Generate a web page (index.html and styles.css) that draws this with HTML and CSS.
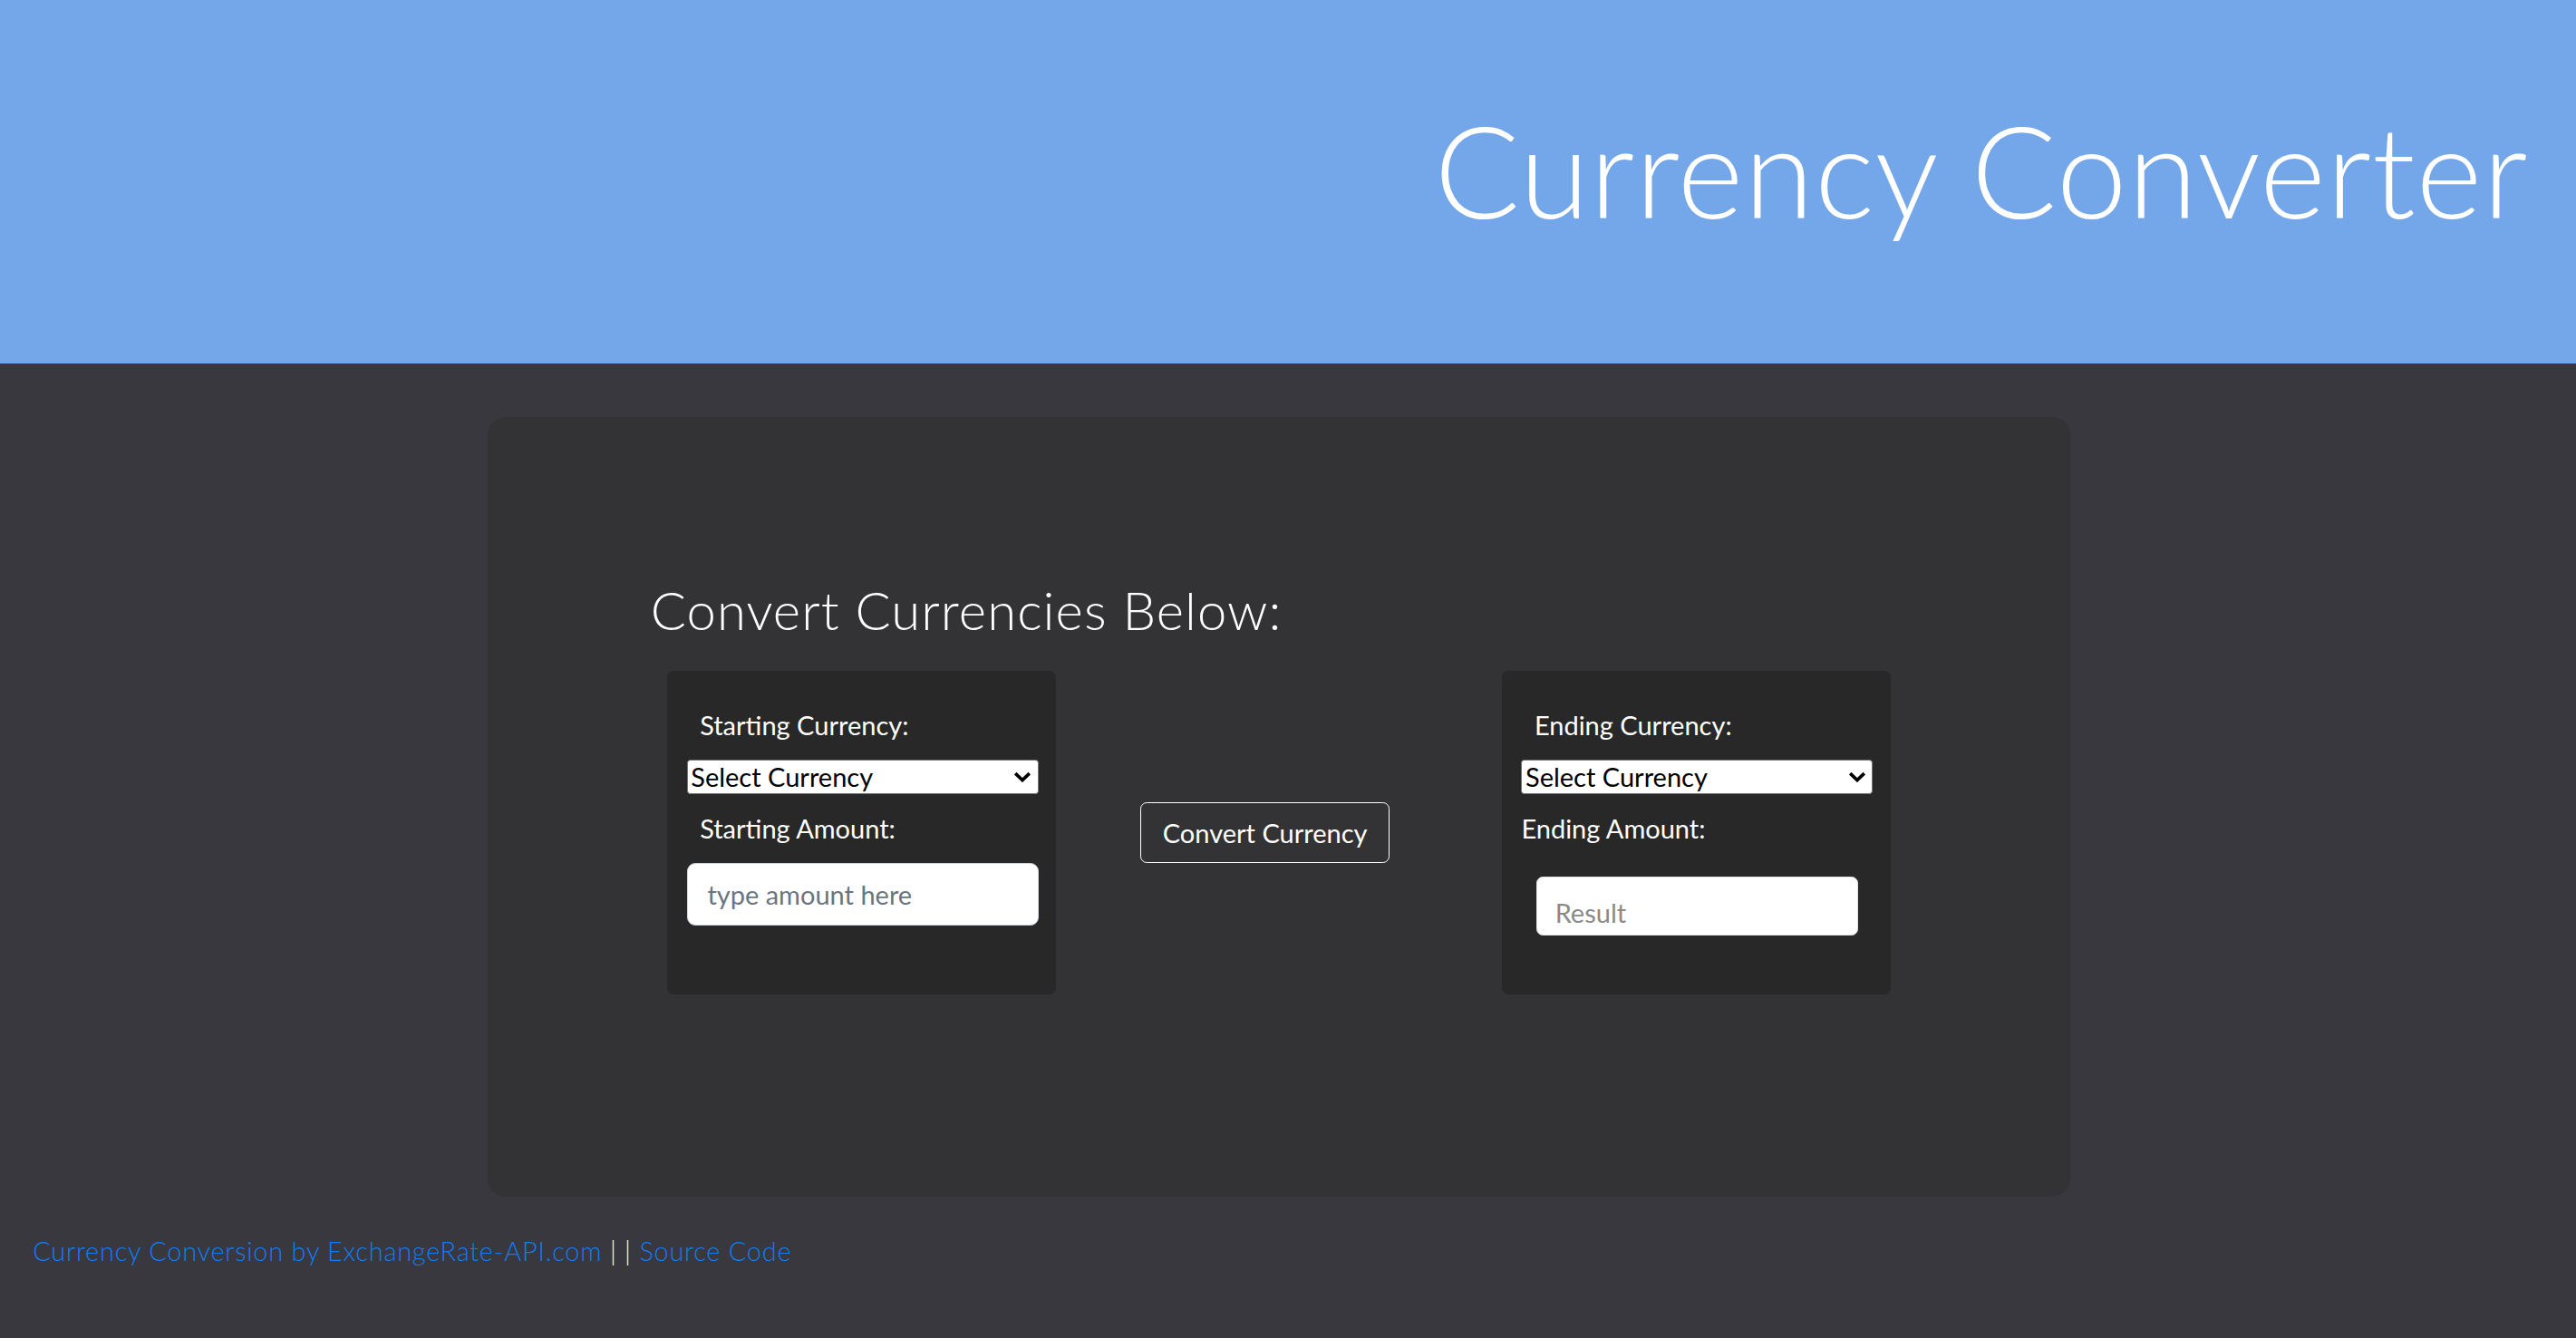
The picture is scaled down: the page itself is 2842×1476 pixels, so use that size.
FILE: index.html
```html
<!DOCTYPE html>
<html lang="en">
<head>
<meta charset="utf-8">
<title>Currency Converter</title>
<link rel="stylesheet" href="styles.css">
</head>
<body>
<header class="site-header">
  <h1 class="site-title">Currency Converter</h1>
</header>
<main class="page">
  <section class="converter-card">
    <h2 class="converter-heading">Convert Currencies Below:</h2>
    <div class="converter-row">
      <div class="currency-box">
        <label class="field-label field-label--indent" for="from">Starting Currency:</label>
        <div class="select-wrap">
          <select class="currency-select" id="from"><option>Select Currency</option></select>
          <svg class="select-chevron" viewBox="0 0 11 7" width="11" height="7" aria-hidden="true"><path d="M1.2 1.2 L5.5 5.3 L9.8 1.2" fill="none" stroke="#000" stroke-width="2"/></svg>
        </div>
        <label class="field-label field-label--indent" for="amount">Starting Amount:</label>
        <input class="amount-input" id="amount" type="text" placeholder="type amount here">
      </div>
      <button class="convert-btn" type="button">Convert Currency</button>
      <div class="currency-box currency-box--end">
        <label class="field-label field-label--indent" for="to">Ending Currency:</label>
        <div class="select-wrap">
          <select class="currency-select" id="to"><option>Select Currency</option></select>
          <svg class="select-chevron" viewBox="0 0 11 7" width="11" height="7" aria-hidden="true"><path d="M1.2 1.2 L5.5 5.3 L9.8 1.2" fill="none" stroke="#000" stroke-width="2"/></svg>
        </div>
        <label class="field-label" for="result">Ending Amount:</label>
        <input class="result-input" id="result" type="text" placeholder="Result">
      </div>
    </div>
  </section>
</main>
<footer class="site-footer">
  <a class="footer-link" href="#">Currency Conversion by ExchangeRate-API.com</a> | | <a class="footer-link" href="#">Source Code</a>
</footer>
</body>
</html>
```
FILE: styles.css
```css
html {
  zoom: 1.8125;
  background: #39383e;
}
body {
  margin: 0;
  background: #39383e;
  color: #fff;
  font-family: "Lato", "Open Sans", sans-serif;
  font-size: 16px;
  line-height: 1.5;
  min-height: 814px;
}
.site-header {
  background: #74a7e9;
  height: 221px;
  display: flex;
  justify-content: flex-end;
  padding-right: 29px;
}
.site-title {
  margin: 0;
  padding-top: 65px;
  font-size: 77px;
  font-weight: 300;
  line-height: 1;
  color: #fff;
  letter-spacing: 0.5px;
}
.page {
  padding-top: 33px;
}
.converter-card {
  margin-left: 297px;
  width: 963px;
  height: 474px;
  box-sizing: border-box;
  background: #333335;
  border-radius: 11px;
  padding-top: 98px;
}
.converter-heading {
  margin: 0 0 18px 99px;
  font-size: 32px;
  font-weight: 300;
  line-height: 1.2;
  letter-spacing: 0.6px;
}
.converter-row {
  display: flex;
  align-items: center;
  padding-left: 109px;
}
.currency-box {
  width: 237px;
  height: 197px;
  box-sizing: border-box;
  background: #282828;
  border-radius: 4px;
  padding: 21px 11px 0 12px;
  display: flex;
  flex-direction: column;
  align-items: flex-start;
}
.field-label {
  display: block;
  font-size: 16px;
  line-height: 24px;
}
.field-label--indent {
  padding-left: 8px;
}
.select-wrap {
  position: relative;
  margin: 9px 0;
  width: 214px;
  height: 21px;
}
.currency-select {
  display: block;
  width: 214px;
  height: 21px;
  box-sizing: border-box;
  appearance: none;
  -webkit-appearance: none;
  font-family: inherit;
  font-size: 16px;
  line-height: 19px;
  color: #000;
  background: #fff;
  border: 1px solid #767676;
  border-radius: 2px;
  padding: 0 0 0 2px;
}
.select-chevron {
  position: absolute;
  right: 4px;
  top: 7px;
  pointer-events: none;
}
.amount-input {
  margin-top: 9px;
  width: 214px;
  height: 38px;
  box-sizing: border-box;
  font-family: inherit;
  font-size: 16px;
  padding: 6px 12px;
  border: 1px solid #ced4da;
  border-radius: 5px;
  background: #fff;
}
.amount-input::placeholder {
  color: #6c757d;
}
.result-input {
  margin: 17px 0 0 9px;
  width: 196px;
  height: 36px;
  box-sizing: border-box;
  font-family: inherit;
  font-size: 16px;
  padding: 10px 11px 2px;
  border: 1px solid #e2e2e2;
  border-radius: 4px;
  background: #fff;
}
.result-input::placeholder {
  color: #8a8a8a;
}
.convert-btn {
  margin-left: 51px;
  width: 152px;
  height: 37px;
  box-sizing: border-box;
  background: transparent;
  color: #fff;
  border: 1px solid #fff;
  border-radius: 4px;
  font-family: inherit;
  font-size: 16px;
  padding: 0 12px;
}
.currency-box--end {
  margin-left: 68px;
}
.site-footer {
  padding: 21px 20px 0;
  font-size: 16px;
  font-weight: 300;
  letter-spacing: 0.4px;
  color: #fff;
}
.footer-link {
  color: #0e7cf4;
  text-decoration: none;
}
```
